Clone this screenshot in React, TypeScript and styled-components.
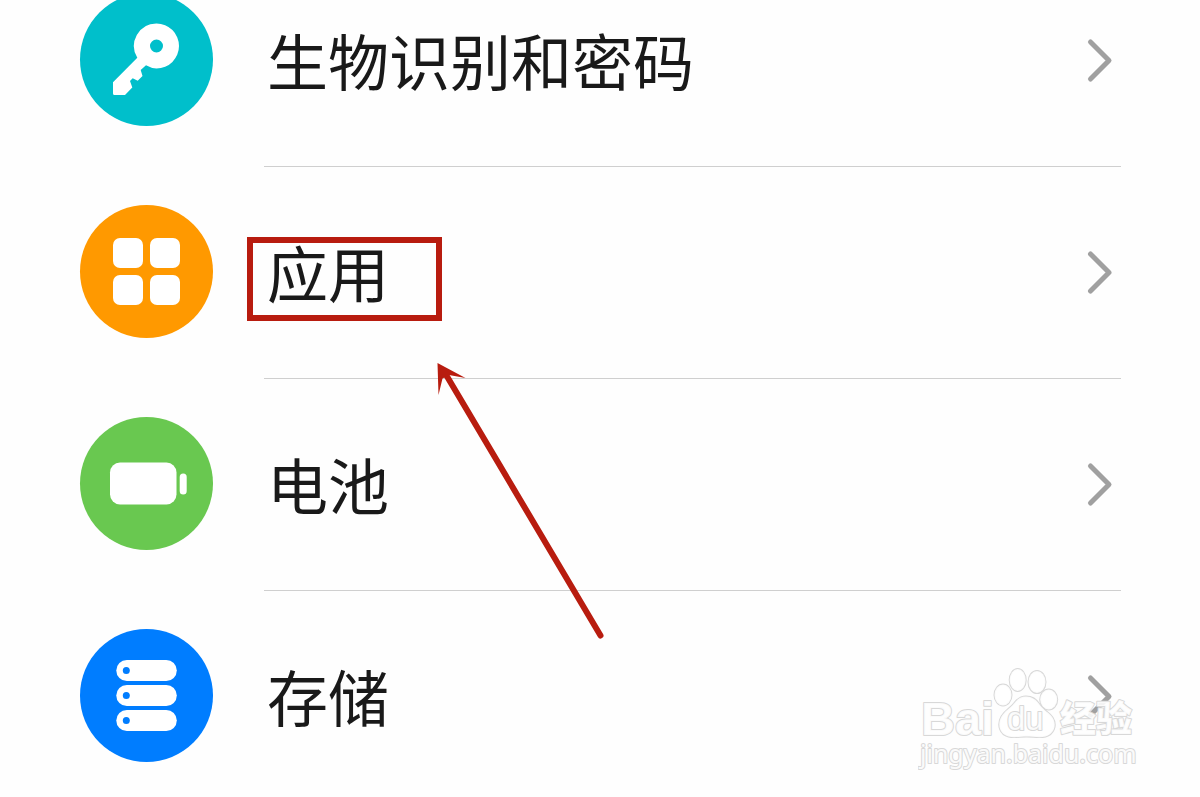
import React from "react";
import styled, { createGlobalStyle } from "styled-components";

const GlobalStyle = createGlobalStyle`
  body {
    margin: 0;
    background: #fefefe;
  }
`;

const Screen = styled.main`
  position: relative;
  height: 100vh;
  overflow: hidden;
  font-family: "Noto Sans CJK SC", sans-serif;
  color: #191919;
`;

/* The list is scrolled so that its first row is partly above the screen. */
const List = styled.ul`
  list-style: none;
  margin: -45px 0 0;
  padding: 0 79px 0 80px;
`;

const Row = styled.li`
  position: relative;
`;

const RowLink = styled.a`
  display: flex;
  gap: 51px;
  color: inherit;
  text-decoration: none;
`;

const IconCircle = styled.span<{ $color: string }>`
  flex: none;
  width: 133px;
  height: 133px;
  margin-top: 38px;
  border-radius: 50%;
  background: ${(p) => p.$color};

  svg {
    display: block;
  }
`;

const RowBody = styled.span`
  flex: 1;
  display: flex;
  align-items: center;
  justify-content: space-between;
  padding: 38px 8px 40px 3px;
  border-bottom: 1px solid #cfcfcf;
`;

const Label = styled.span`
  font-size: 61px;
  line-height: 133px;
`;

const Highlight = styled.span`
  position: absolute;
  left: 167px;
  top: 70px;
  width: 195px;
  height: 84px;
  box-sizing: border-box;
  border: 6px solid #b81c0f;
`;

const Pointer = styled.svg`
  position: absolute;
  z-index: 1;
  left: 350px;
  top: 190px;
  pointer-events: none;
`;

const Watermark = styled.div`
  position: absolute;
  right: 62px;
  bottom: 20px;
  pointer-events: none;
`;

const WatermarkDrawing = styled.svg`
  display: block;
  fill: #fff;
  fill-opacity: 0.9;
  stroke: #d8d8d8;
  stroke-width: 2;
  stroke-linejoin: round;
  paint-order: stroke;
`;

const KeyIcon = () => (
  <svg width="133" height="133" viewBox="0 0 133 133" aria-hidden="true">
    <path
      fill="#fff"
      fillRule="evenodd"
      d="M76.5 30.5a22.5 22.5 0 1 1 0 45q-5.5-.4-10.5-3.3L60.7 77L62.5 83L57.7 87.7L52.7 85.2L50 88L52.3 94.5L45 102H34.5Q33 102 33 100.5V89.2L57.3 64.8A22.5 22.5 0 0 1 76.5 30.5ZM76.5 46.5a6.5 6.5 0 1 0 0 13a6.5 6.5 0 1 0 0-13Z"
    />
  </svg>
);

const AppsIcon = () => (
  <svg width="133" height="133" viewBox="0 0 133 133" fill="#fff" aria-hidden="true">
    <rect x="33" y="33" width="30" height="30" rx="7" />
    <rect x="70" y="33" width="30" height="30" rx="7" />
    <rect x="33" y="70" width="30" height="30" rx="7" />
    <rect x="70" y="70" width="30" height="30" rx="7" />
  </svg>
);

const BatteryIcon = () => (
  <svg width="133" height="133" viewBox="0 0 133 133" fill="#fff" aria-hidden="true">
    <rect x="30" y="45.5" width="66.5" height="42" rx="10" />
    <rect x="99.7" y="56.5" width="7" height="21" rx="3.5" />
  </svg>
);

const StorageIcon = () => (
  <svg width="133" height="133" viewBox="0 0 133 133" aria-hidden="true">
    {[31, 56, 81].map((y) => (
      <g key={y}>
        <rect x="36.3" y={y} width="60.5" height="21" rx="10.5" fill="#fff" />
        <circle cx="46.3" cy={y + 10.5} r="3.5" fill="#007dff" />
      </g>
    ))}
  </svg>
);

const Chevron = () => (
  <svg width="28" height="46" viewBox="0 0 28 46" fill="none" aria-hidden="true">
    <path d="M5.5 5L24 23.5L5.500 42" stroke="#a0a0a0" strokeWidth="5" strokeLinecap="round" strokeLinejoin="round" />
  </svg>
);

const WatermarkLogo = () => (
  <WatermarkDrawing width="220" height="112" viewBox="0 0 220 112">
    <ellipse cx="85" cy="30" rx="8.5" ry="10.5" strokeWidth="2" />
    <ellipse cx="99.7" cy="15" rx="8" ry="11" />
    <ellipse cx="119" cy="17" rx="8.5" ry="11" />
    <ellipse cx="130.7" cy="34.5" rx="8.5" ry="10" />
    <path d="M108 31.5c-6 0-9 3-12 7c-4 5-9 7-12.500 13c-5 9-1 18 7 20c6 1.500 11 0 18 0s13 1.500 19 0c8-2 12-11 7-19c-3-5-9-7-13-13c-3-5-8-8-13.500-8Z" />
    <text x="3" y="70" fontFamily="Liberation Sans, sans-serif" fontWeight="700" fontSize="47">Bai</text>
    <text x="89" y="65" fontFamily="Liberation Sans, sans-serif" fontSize="33">du</text>
    <text x="142" y="67" fontFamily="Noto Sans CJK SC, sans-serif" fontWeight="900" fontSize="36">经验</text>
    <text x="2" y="98" fontFamily="Noto Sans, sans-serif" fontSize="25">jingyan.baidu.com</text>
  </WatermarkDrawing>
);

const items = [
  { id: "security", label: "生物识别和密码", color: "#00bfcb", Icon: KeyIcon },
  { id: "apps", label: "应用", color: "#ff9900", Icon: AppsIcon, marked: true },
  { id: "battery", label: "电池", color: "#69c850", Icon: BatteryIcon },
  { id: "storage", label: "存储", color: "#007dff", Icon: StorageIcon },
];

export default function App() {
  return (
    <Screen>
      <GlobalStyle />
      <List>
        {items.map(({ id, label, color, Icon, marked }) => (
          <Row key={id}>
            <RowLink href={`#${id}`}>
              <IconCircle $color={color}>
                <Icon />
              </IconCircle>
              <RowBody>
                <Label>{label}</Label>
                <Chevron />
              </RowBody>
            </RowLink>
            {marked && (
              <>
                <Highlight />
                <Pointer width="180" height="290" viewBox="0 0 180 290" aria-hidden="true">
                  <path d="M15 16L170.5 278.5" stroke="#b81c0f" strokeWidth="6" strokeLinecap="round" />
                  <path d="M7.500 6L35.500 21L19 18L12.500 21.500L8.500 38Z" fill="#b81c0f" />
                </Pointer>
              </>
            )}
          </Row>
        ))}
      </List>
      <Watermark>
        <WatermarkLogo />
      </Watermark>
    </Screen>
  );
}
